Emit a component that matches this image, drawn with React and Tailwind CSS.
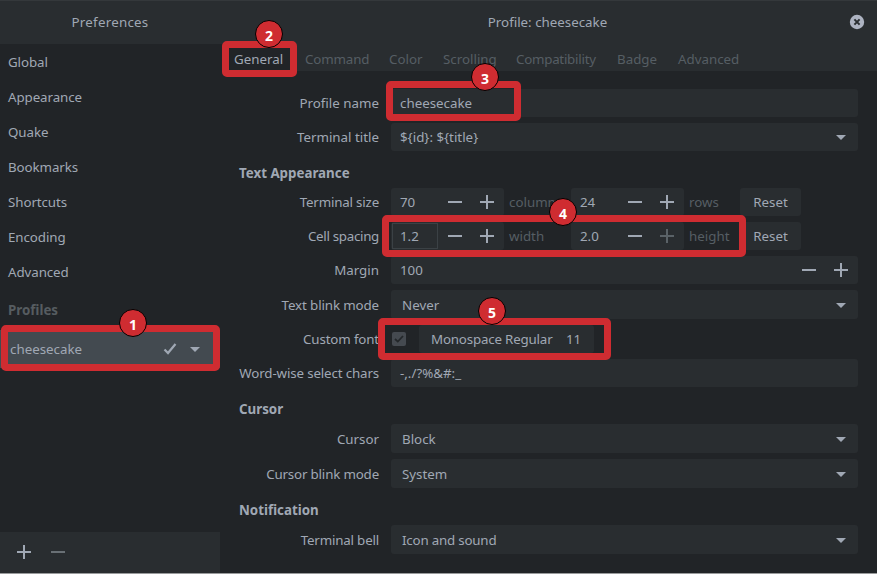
function Plus({ className = "" }) {
  return (
    <svg width="14" height="14" viewBox="0 0 14 14" className={className} shapeRendering="crispEdges">
      <path d="M0 6h14v2H0zM6 0h2v14H6z" fill="currentColor" />
    </svg>
  );
}

function Minus({ className = "" }) {
  return (
    <svg width="14" height="14" viewBox="0 0 14 14" className={className} shapeRendering="crispEdges">
      <path d="M0 6h14v2H0z" fill="currentColor" />
    </svg>
  );
}

function Caret() {
  return (
    <svg width="10" height="5" viewBox="0 0 10 5" className="shrink-0">
      <path d="M0 0h10L5 5z" fill="currentColor" />
    </svg>
  );
}

function Row({ label, tall, tracking = "", children }) {
  return (
    <div className={tall ? "flex h-[29px] items-center" : "flex h-7 items-center"}>
      <div className={"w-[159px] shrink-0 pr-3 text-right whitespace-nowrap " + tracking}>{label}</div>
      {children}
    </div>
  );
}

function Heading({ children }) {
  return <h2 className="flex h-[25px] items-end pl-[7px] leading-[18px] font-bold">{children}</h2>;
}

function Select({ value, entry, tracking = "" }) {
  return (
    <div className={(entry ? "pl-[9px]" : "pl-[11px]") + " flex h-full w-[467px] items-center justify-between rounded-[3px] bg-[#292d30] pr-3"}>
      <span className={tracking}>{value}</span>
      <span className={entry ? "flex" : "flex pt-px"}><Caret /></span>
    </div>
  );
}

function Spin({ value, focused, maxed }) {
  return (
    <div className="flex h-full w-[113px] items-center rounded-[3px] bg-[#292d30]">
      <span className={(focused ? "ml-px border-[#3b4145] pl-[7px]" : "border-transparent pl-2 pr-px") + " flex h-[26px] w-[46px] items-center border"}>{value}</span>
      <Minus className={focused ? "ml-[10px]" : "ml-[11px]"} />
      <Plus className={maxed ? "ml-[18px] text-[#5a6267]" : "ml-[18px]"} />
    </div>
  );
}

function Reset() {
  return <button className="h-full w-[61px] rounded-[3px] bg-[#292d30]">Reset</button>;
}

function Frame({ className }) {
  return <div className={"absolute rounded-[5px] border-[7px] border-[#cf2c31] " + className} />;
}

function Badge({ n, className }) {
  return (
    <div className={"absolute flex size-7 items-center justify-center rounded-full border border-black bg-[#cf2c31] pt-[3px] font-['Noto_Sans',sans-serif] text-[14px] leading-none font-bold text-white " + className}>
      {n}
    </div>
  );
}

const sections = ["Global", "Appearance", "Quake", "Bookmarks", "Shortcuts", "Encoding", "Advanced"];

export default function App() {
  return (
    <div className="relative flex h-[574px] w-[877px] overflow-hidden border-b border-[#999b9c] bg-[#212427] font-['Noto_Sans',sans-serif] text-[13.333px] leading-[18px] text-[#a0a8b4]">
      <aside className="flex w-[220px] shrink-0 flex-col">
        <header className="flex h-11 items-center justify-center border-t border-[#34383b] bg-[#292d30] pb-[2px] tracking-[0.25px]">Preferences</header>
        <nav className="flex flex-col">
          {sections.map((s) => (
            <div key={s} className="flex h-[35px] items-center pl-2 tracking-[-0.08px]">{s}</div>
          ))}
          <div className="flex h-[41px] items-center pl-2 font-bold text-[#565c60]">Profiles</div>
          <div className="flex h-[38px] items-center bg-[#434a50] pl-[10px]">
            <span className="flex-1">cheesecake</span>
            <svg width="14" height="12" viewBox="0 0 14 12" className="mr-[13px]">
              <path d="M1.5 6.5L5 10L12.5 1" fill="none" stroke="currentColor" strokeWidth="2.2" />
            </svg>
            <span className="mr-5 flex"><Caret /></span>
          </div>
        </nav>
        <footer className="mt-auto flex h-[41px] items-center gap-5 bg-[#292d30] pb-[2px] pl-[17px]">
          <Plus />
          <Minus className="text-[#697075]" />
        </footer>
      </aside>

      <main className="flex flex-1 flex-col">
        <header className="flex h-11 items-center border-t border-[#34383b] bg-[#292d30] pr-3 pb-[2px]">
          <span className="flex-1 pl-[26px] text-center">Profile: cheesecake</span>
          <svg width="16" height="16" viewBox="0 0 16 16">
            <circle cx="8" cy="8" r="7.2" fill="#adb3c1" />
            <path d="M5.4 5.4l5.2 5.2M10.6 5.4l-5.2 5.2" stroke="#292d30" strokeWidth="2" />
          </svg>
        </header>
        <div className="flex h-[27px] items-center bg-[#292d30] text-[#565e64]">
          <span className="flex h-full w-[74px] items-center bg-[#212427] pt-[2px] pl-[14px] text-[#a0a8b4]">General</span>
          <span className="w-[84px] pt-[2px] pl-[11px] tracking-[-0.15px]">Command</span>
          <span className="w-[54px] pt-[2px] pl-[11px]">Color</span>
          <span className="w-[73px] pt-[2px] pl-[11px]">Scrolling</span>
          <span className="w-[101px] pt-[2px] pl-[11px] tracking-[-0.25px]">Compatibility</span>
          <span className="w-[61px] pt-[2px] pl-[11px]">Badge</span>
          <span className="pt-[2px] pl-[11px]">Advanced</span>
        </div>

        <div className="flex flex-col gap-1.5 pt-[18px] pl-3">
          <Row label="Profile name">
            <div className="flex h-full w-[467px] items-center rounded-[3px] bg-[#292d30] pl-[9px]">cheesecake</div>
          </Row>
          <Row label="Terminal title"><Select entry value="${id}: ${title}" /></Row>

          <Heading>Text Appearance</Heading>
          <Row label="Terminal size" tracking="tracking-[-0.18px]">
            <Spin value="70" />
            <span className="w-[67px] pl-[5px] text-[#565e64]">columns</span>
            <Spin value="24" />
            <span className="w-14 pl-[5px] text-[#565e64]">rows</span>
            <Reset />
          </Row>
          <Row label="Cell spacing" tracking="tracking-[-0.3px]">
            <Spin value="1.2" focused />
            <span className="w-[67px] pl-[5px] text-[#565e64]">width</span>
            <Spin value="2.0" maxed />
            <span className="w-14 pl-[5px] text-[#565e64]">height</span>
            <Reset />
          </Row>
          <Row label="Margin">
            <div className="flex h-full w-[467px] items-center rounded-[3px] bg-[#292d30] pr-[10px] pl-[9px]">
              <span className="flex-1">100</span>
              <Minus />
              <Plus className="ml-[18px]" />
            </div>
          </Row>
          <Row label="Text blink mode" tracking="tracking-[-0.12px]" tall><Select value="Never" /></Row>
          <Row label="Custom font" tracking="tracking-[-0.15px]">
            <div className="ml-px flex size-[14px] items-center justify-center rounded-[2px] bg-[#454a50]">
              <svg width="10" height="8" viewBox="0 0 10 8">
                <path d="M1 4l2.8 2.6L9 1" fill="none" stroke="#23272a" strokeWidth="1.8" />
              </svg>
            </div>
            <div className="ml-[13px] flex h-full w-[175px] items-center rounded-[3px] bg-[#292d30] pl-3">
              <span className="w-[122px] tracking-[-0.18px] whitespace-nowrap">Monospace Regular</span>
              <span className="ml-[13px]">11</span>
            </div>
          </Row>
          <Row label="Word-wise select chars" tracking="tracking-[-0.14px]">
            <div className="flex h-full w-[467px] items-center rounded-[3px] bg-[#292d30] pl-[9px]">-,./?%&amp;#:_</div>
          </Row>

          <Heading>Cursor</Heading>
          <Row label="Cursor" tall><Select value="Block" /></Row>
          <Row label="Cursor blink mode" tracking="tracking-[-0.17px]" tall><Select value="System" /></Row>

          <Heading>Notification</Heading>
          <Row label="Terminal bell" tracking="tracking-[-0.18px]" tall><Select value="Icon and sound" tracking="tracking-[-0.2px]" /></Row>
        </div>
      </main>

      <Frame className="top-[325px] left-px h-[46px] w-[219px]" />
      <Frame className="top-[41px] left-[222px] h-[36px] w-[75px]" />
      <Frame className="top-[81px] left-[386px] h-[40px] w-[135px]" />
      <Frame className="top-[215px] left-[382px] h-[42px] w-[364px]" />
      <Frame className="top-[318px] left-[378px] h-[42px] w-[233px]" />
      <Badge n="1" className="top-[309px] left-[119px]" />
      <Badge n="2" className="top-[20px] left-[255px]" />
      <Badge n="3" className="top-[63px] left-[471px]" />
      <Badge n="4" className="top-[198px] left-[549px]" />
      <Badge n="5" className="top-[297px] left-[478px]" />
    </div>
  );
}
